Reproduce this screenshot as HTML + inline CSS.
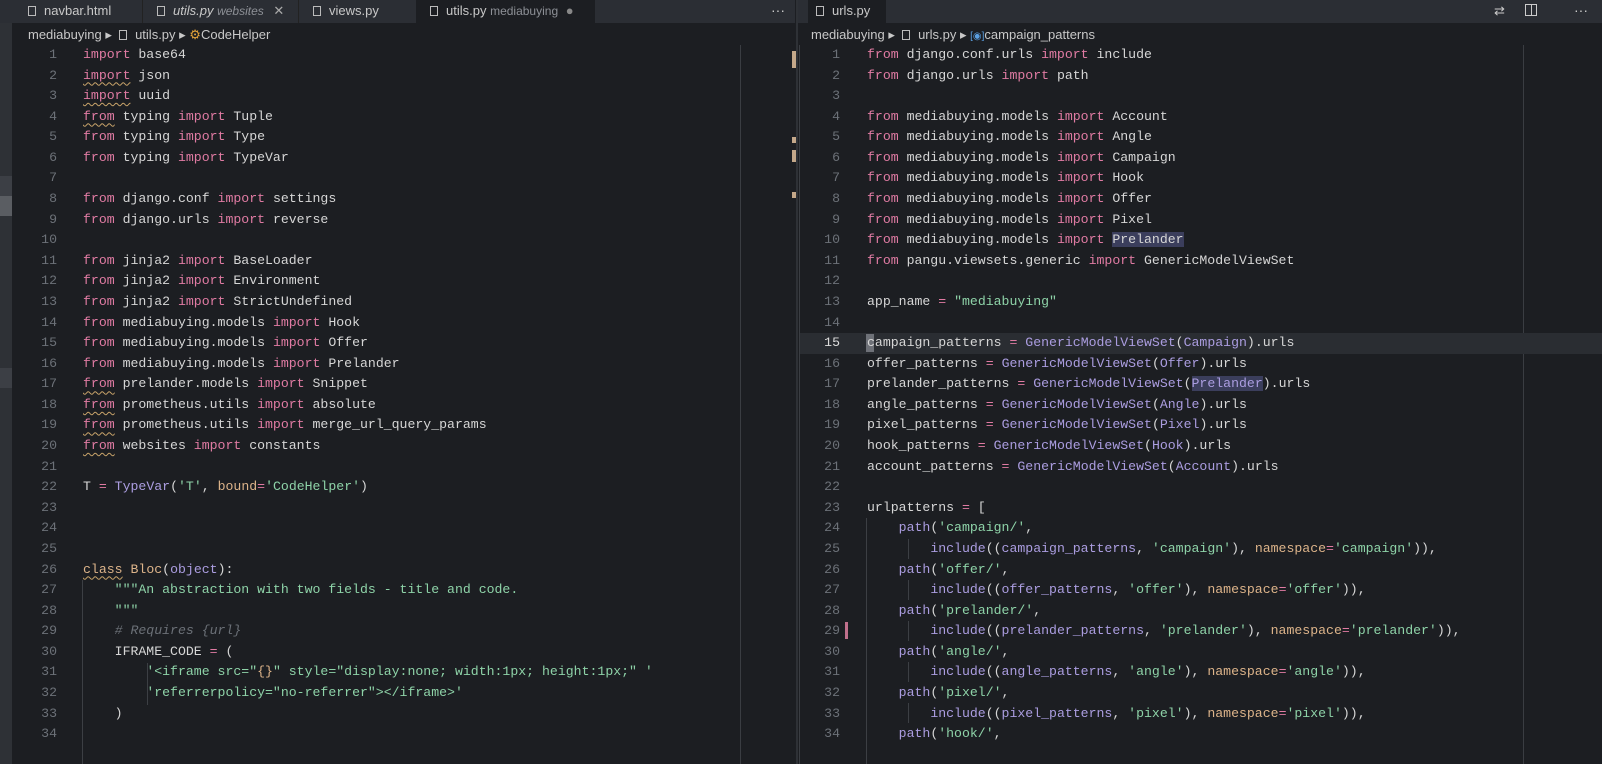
<!DOCTYPE html>
<html><head><meta charset="utf-8"><style>
*{margin:0;padding:0;box-sizing:border-box}
body{width:1602px;height:764px;background:#1c1e22;overflow:hidden;position:relative;font-family:"Liberation Sans",sans-serif}
.tabs{position:absolute;top:0;height:23px;background:#2b2e34}
.tab{position:absolute;top:0;height:23px;color:#c8c8c8;font-size:13px;line-height:21px;padding-left:14px;white-space:nowrap;overflow:hidden}
.tab .ic{display:inline-block;width:8px;height:10px;border:1px solid #bbb;margin-right:8px;vertical-align:-1px}
.sub{color:#8d9096;font-size:12px}
.bc{position:absolute;top:24px;height:21px;color:#c8c8c8;font-size:13px;line-height:21px;white-space:nowrap}
.code{position:absolute;top:45px;font-family:"Liberation Mono",monospace;font-size:13.2px;color:#d6d6d6;white-space:pre}
.ln{position:absolute;width:40px;text-align:right;color:#6c7178}
.l{position:absolute;height:20.58px;line-height:20.58px}
.k{color:#e07ba3}.c{color:#ab9de0}.s{color:#8ed3a8}.o{color:#ddb48a}.m{color:#6b7077;font-style:italic}
.w{text-decoration:underline wavy #c9a46a 1px;text-underline-offset:3px}
.hl{background:#3b3e5c}
</style></head><body>
<div class="tabs" style="left:0;width:795px"></div>
<div class="tab" style="left:14px;width:128px;background:#2b2e34"><span class="ic"></span>navbar.html</div>
<div class="tab" style="left:142px;width:156px;background:#2b2e34;border-left:1px solid #222"><span class="ic"></span><i>utils.py</i> <span class="sub"><i>websites</i></span> <span style="margin-left:6px;color:#aaa">✕</span></div>
<div class="tab" style="left:298px;width:118px;background:#2b2e34;border-left:1px solid #222"><span class="ic"></span>views.py</div>
<div class="tab" style="left:416px;width:179px;background:#1c1e22"><span class="ic"></span>utils.py <span class="sub">mediabuying</span> <span style="color:#888;margin-left:4px">●</span></div>
<div style="position:absolute;left:771px;top:2px;color:#ccc;font-size:14px">···</div>
<div class="tabs" style="left:798px;width:804px"></div>
<div class="tab" style="left:808px;width:78px;background:#1c1e22;padding-left:8px"><span class="ic"></span>urls.py <span style="margin-left:14px;color:#ddd">✕</span></div>
<div style="position:absolute;left:1494px;top:3px;color:#ccc;font-size:13px">⇄</div>
<div style="position:absolute;left:1525px;top:4px;width:12px;height:12px;border:1px solid #ccc"><div style="position:absolute;left:5px;top:0;width:1px;height:10px;background:#ccc"></div></div>
<div style="position:absolute;left:1574px;top:2px;color:#ccc;font-size:14px">···</div>
<div style="position:absolute;left:796px;top:0;width:2px;height:764px;background:#2e3136"></div>
<div style="position:absolute;left:0;top:23px;width:12px;height:741px;background:#2e3136"></div>
<div style="position:absolute;left:0;top:176px;width:12px;height:20px;background:#3c3f45"></div>
<div style="position:absolute;left:0;top:196px;width:12px;height:20px;background:#5a5d62"></div>
<div style="position:absolute;left:0;top:368px;width:12px;height:20px;background:#3c3f45"></div>
<div class="bc" style="left:28px">mediabuying ▸ <span style="display:inline-block;width:8px;height:10px;border:1px solid #bbb;margin:0 4px;vertical-align:-1px"></span> utils.py ▸ <span style="color:#e2a33a">⚙</span>CodeHelper</div>
<div class="bc" style="left:811px">mediabuying ▸ <span style="display:inline-block;width:8px;height:10px;border:1px solid #bbb;margin:0 4px;vertical-align:-1px"></span> urls.py ▸ <span style="color:#5a9ee0;font-size:10px">[◉]</span>campaign_patterns</div>
<div style="position:absolute;left:740px;top:45px;width:1px;height:719px;background:#3a3d42"></div>
<div style="position:absolute;left:1523px;top:45px;width:1px;height:719px;background:#3a3d42"></div>
<div style="position:absolute;left:799px;top:45px;width:1px;height:719px;background:#3a3d42"></div>
<div style="position:absolute;left:792px;top:51px;width:4px;height:17px;background:#c4a88a"></div>
<div style="position:absolute;left:792px;top:137px;width:4px;height:6px;background:#c4a88a"></div>
<div style="position:absolute;left:792px;top:150px;width:4px;height:12px;background:#c4a88a"></div>
<div style="position:absolute;left:792px;top:192px;width:4px;height:6px;background:#c4a88a"></div>
<div style="position:absolute;left:845px;top:622px;width:3px;height:17px;background:#c0708c"></div>
<div style="position:absolute;left:800px;top:333px;width:802px;height:20.6px;background:#2a2d32"></div>
<div style="position:absolute;left:866px;top:334px;width:8px;height:18px;background:#6e7178"></div>
<div style="position:absolute;left:82px;top:580px;width:1px;height:184px;background:#3c3f44"></div>
<div style="position:absolute;left:147px;top:663px;width:1px;height:42px;background:#3c3f44"></div>
<div style="position:absolute;left:866px;top:518px;width:1px;height:246px;background:#3c3f44"></div>
<div style="position:absolute;left:908px;top:539px;width:1px;height:20px;background:#3c3f44"></div>
<div style="position:absolute;left:908px;top:580px;width:1px;height:20px;background:#3c3f44"></div>
<div style="position:absolute;left:908px;top:621px;width:1px;height:20px;background:#3c3f44"></div>
<div style="position:absolute;left:908px;top:662px;width:1px;height:20px;background:#3c3f44"></div>
<div style="position:absolute;left:908px;top:703px;width:1px;height:20px;background:#3c3f44"></div>

<div class="code" id="L" style="left:0;top:45px"></div>
<div class="code" id="R" style="left:0;top:45px"></div>
<script>
var L=[
'<span class="k">import</span> base64',
'<span class="k w">import</span> json',
'<span class="k w">import</span> uuid',
'<span class="k w">from</span> typing <span class="k">import</span> Tuple',
'<span class="k">from</span> typing <span class="k">import</span> Type',
'<span class="k">from</span> typing <span class="k">import</span> TypeVar',
'',
'<span class="k">from</span> django.conf <span class="k">import</span> settings',
'<span class="k">from</span> django.urls <span class="k">import</span> reverse',
'',
'<span class="k">from</span> jinja2 <span class="k">import</span> BaseLoader',
'<span class="k">from</span> jinja2 <span class="k">import</span> Environment',
'<span class="k">from</span> jinja2 <span class="k">import</span> StrictUndefined',
'<span class="k">from</span> mediabuying.models <span class="k">import</span> Hook',
'<span class="k">from</span> mediabuying.models <span class="k">import</span> Offer',
'<span class="k">from</span> mediabuying.models <span class="k">import</span> Prelander',
'<span class="k w">from</span> prelander.models <span class="k">import</span> Snippet',
'<span class="k w">from</span> prometheus.utils <span class="k">import</span> absolute',
'<span class="k w">from</span> prometheus.utils <span class="k">import</span> merge_url_query_params',
'<span class="k w">from</span> websites <span class="k">import</span> constants',
'',
'T <span class="k">=</span> <span class="c">TypeVar</span>(<span class="s">\'T\'</span>, <span class="o">bound</span><span class="k">=</span><span class="s">\'CodeHelper\'</span>)',
'','','',
'<span class="o w">class</span> <span class="o">Bloc</span>(<span class="c">object</span>):',
'    <span class="s">"""An abstraction with two fields - title and code.</span>',
'    <span class="s">"""</span>',
'    <span class="m"># Requires {url}</span>',
'    IFRAME_CODE <span class="k">=</span> (',
'        <span class="s">\'&lt;iframe src="<span class="o">{}</span>" style="display:none; width:1px; height:1px;" \'</span>',
'        <span class="s">\'referrerpolicy="no-referrer"&gt;&lt;/iframe&gt;\'</span>',
'    )',
''];
var R=[
'<span class="k">from</span> django.conf.urls <span class="k">import</span> include',
'<span class="k">from</span> django.urls <span class="k">import</span> path',
'',
'<span class="k">from</span> mediabuying.models <span class="k">import</span> Account',
'<span class="k">from</span> mediabuying.models <span class="k">import</span> Angle',
'<span class="k">from</span> mediabuying.models <span class="k">import</span> Campaign',
'<span class="k">from</span> mediabuying.models <span class="k">import</span> Hook',
'<span class="k">from</span> mediabuying.models <span class="k">import</span> Offer',
'<span class="k">from</span> mediabuying.models <span class="k">import</span> Pixel',
'<span class="k">from</span> mediabuying.models <span class="k">import</span> <span class="hl">Prelander</span>',
'<span class="k">from</span> pangu.viewsets.generic <span class="k">import</span> GenericModelViewSet',
'',
'app_name <span class="k">=</span> <span class="s">"mediabuying"</span>',
'',
'campaign_patterns <span class="k">=</span> <span class="c">GenericModelViewSet</span>(<span class="c">Campaign</span>).urls',
'offer_patterns <span class="k">=</span> <span class="c">GenericModelViewSet</span>(<span class="c">Offer</span>).urls',
'prelander_patterns <span class="k">=</span> <span class="c">GenericModelViewSet</span>(<span class="c hl">Prelander</span>).urls',
'angle_patterns <span class="k">=</span> <span class="c">GenericModelViewSet</span>(<span class="c">Angle</span>).urls',
'pixel_patterns <span class="k">=</span> <span class="c">GenericModelViewSet</span>(<span class="c">Pixel</span>).urls',
'hook_patterns <span class="k">=</span> <span class="c">GenericModelViewSet</span>(<span class="c">Hook</span>).urls',
'account_patterns <span class="k">=</span> <span class="c">GenericModelViewSet</span>(<span class="c">Account</span>).urls',
'',
'urlpatterns <span class="k">=</span> [',
'    <span class="c">path</span>(<span class="s">\'campaign/\'</span>,',
'        <span class="c">include</span>((<span class="c">campaign_patterns</span>, <span class="s">\'campaign\'</span>), <span class="o">namespace</span><span class="k">=</span><span class="s">\'campaign\'</span>)),',
'    <span class="c">path</span>(<span class="s">\'offer/\'</span>,',
'        <span class="c">include</span>((<span class="c">offer_patterns</span>, <span class="s">\'offer\'</span>), <span class="o">namespace</span><span class="k">=</span><span class="s">\'offer\'</span>)),',
'    <span class="c">path</span>(<span class="s">\'prelander/\'</span>,',
'        <span class="c">include</span>((<span class="c">prelander_patterns</span>, <span class="s">\'prelander\'</span>), <span class="o">namespace</span><span class="k">=</span><span class="s">\'prelander\'</span>)),',
'    <span class="c">path</span>(<span class="s">\'angle/\'</span>,',
'        <span class="c">include</span>((<span class="c">angle_patterns</span>, <span class="s">\'angle\'</span>), <span class="o">namespace</span><span class="k">=</span><span class="s">\'angle\'</span>)),',
'    <span class="c">path</span>(<span class="s">\'pixel/\'</span>,',
'        <span class="c">include</span>((<span class="c">pixel_patterns</span>, <span class="s">\'pixel\'</span>), <span class="o">namespace</span><span class="k">=</span><span class="s">\'pixel\'</span>)),',
'    <span class="c">path</span>(<span class="s">\'hook/\'</span>,'];
function build(id,arr,lnx,cx,cur){var h='';for(var i=0;i<arr.length;i++){var t=i*20.58;
h+='<div class="ln" style="left:'+lnx+'px;top:'+t+'px;height:20.58px;line-height:20.58px'+(i+1==cur?';color:#ddd':'')+'">'+(i+1)+'</div>';
h+='<div class="l" style="left:'+cx+'px;top:'+t+'px">'+arr[i]+'</div>';}
document.getElementById(id).innerHTML=h;}
build('L',L,17,83,0);build('R',R,800,867,15);
</script>
</body></html>
